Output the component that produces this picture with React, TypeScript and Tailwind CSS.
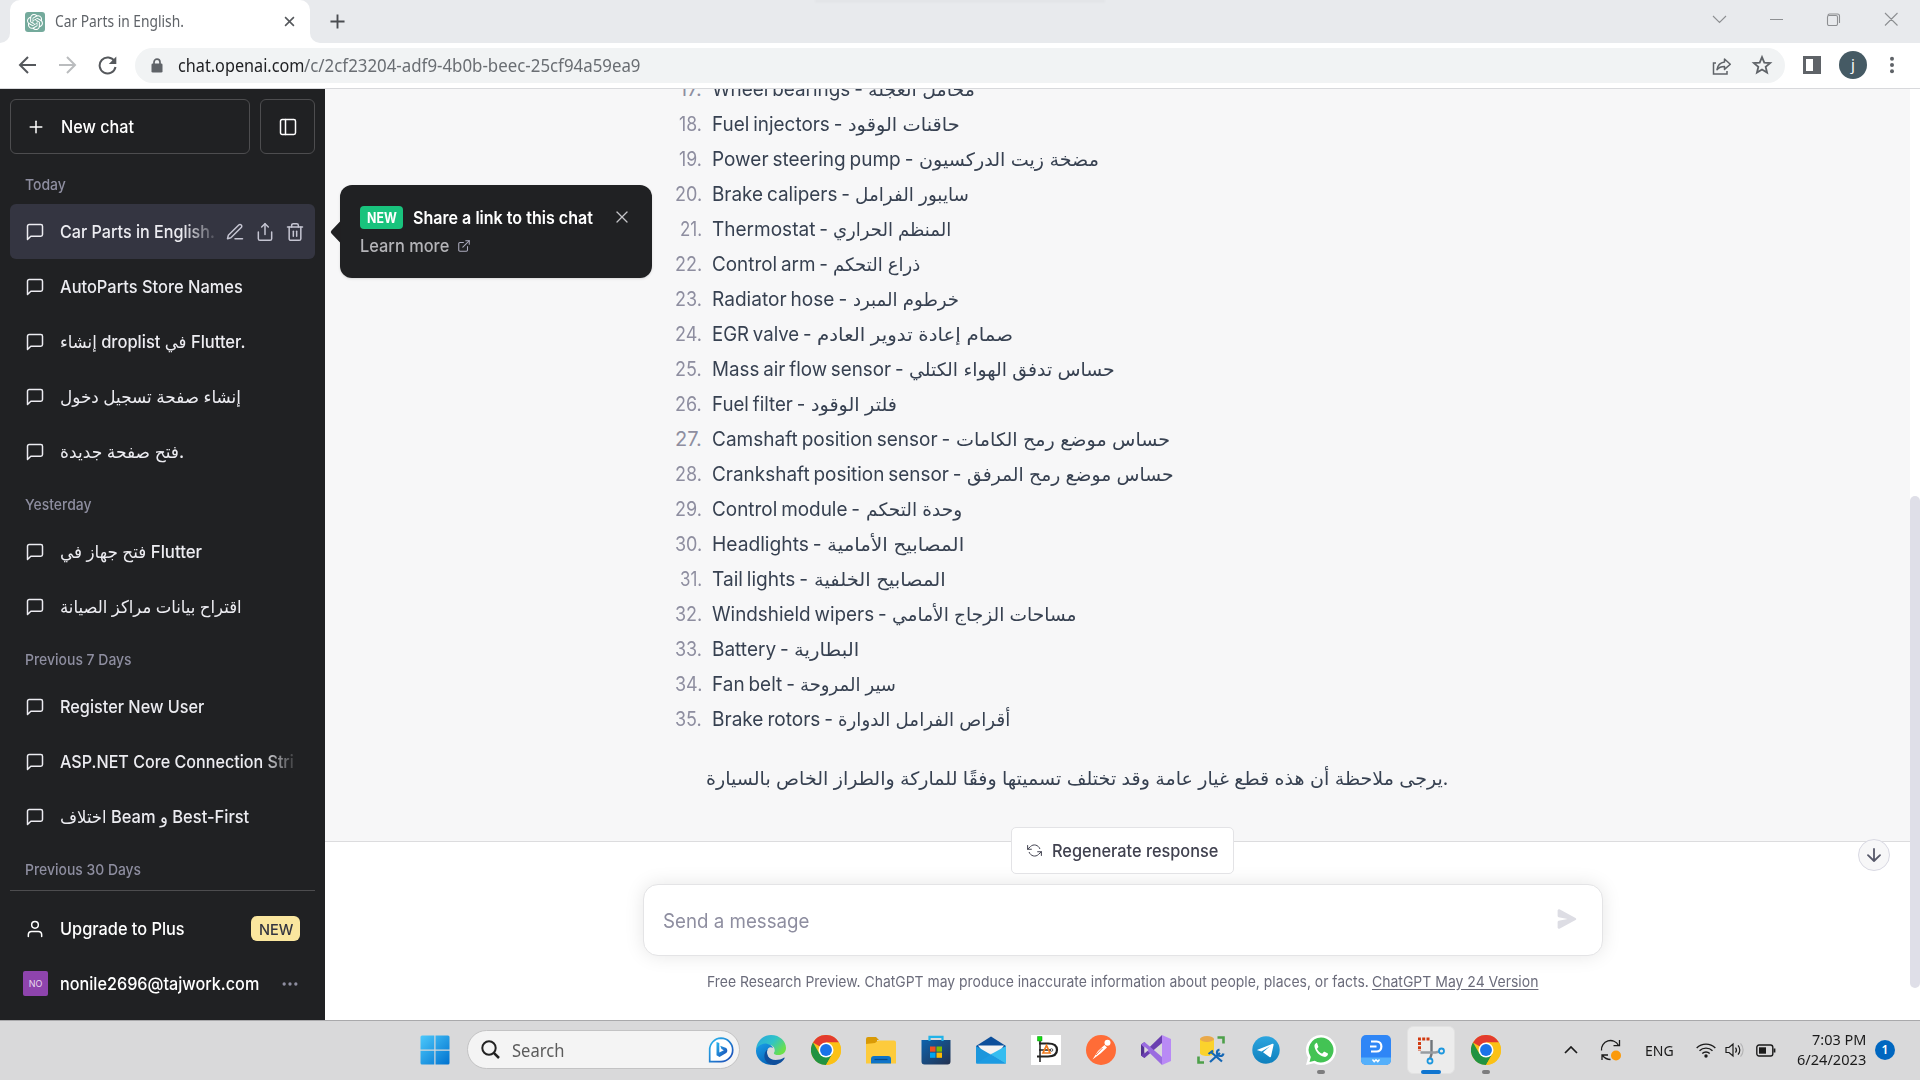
import React, { useLayoutEffect, useRef, useState, type ReactNode } from "react";
import {
  FiEdit3,
  FiExternalLink,
  FiMessageSquare,
  FiMoreHorizontal,
  FiPlus,
  FiRefreshCcw,
  FiShare,
  FiSidebar,
  FiTrash2,
  FiUser,
  FiX,
} from "react-icons/fi";
import { SiOpenai } from "react-icons/si";

/** One line of text squeezed or stretched to an exact width. */
function Fit({ w, className = "", children }: { w: number; className?: string; children: ReactNode }) {
  const ref = useRef<HTMLSpanElement>(null);
  const [scale, setScale] = useState(1);
  useLayoutEffect(() => {
    if (ref.current) setScale(w / ref.current.offsetWidth);
  }, [w]);
  return (
    <span className={`block shrink-0 whitespace-nowrap ${className}`} style={{ width: w }}>
      <span ref={ref} className="inline-block origin-left" style={{ transform: `scaleX(${scale})` }}>
        {children}
      </span>
    </span>
  );
}

const ui = "font-['Noto_Sans','DejaVu_Sans',sans-serif]";

/* ---------- browser chrome ---------- */

function TabStrip() {
  return (
    <div className="relative flex h-[43px] shrink-0 bg-[#e8eaed]">
      <div className="flex w-[10px] items-end bg-white">
        <div className="h-[43px] w-full rounded-br-[10px] bg-[#e8eaed]" />
      </div>
      <div className="bg-[#e8eaed]">
        <div className="flex h-[43px] w-[300px] items-center rounded-t-[10px] bg-white pl-[15px] pr-[15px]">
          <div className="flex size-5 items-center justify-center rounded-[3px] bg-[#74aa9c]">
            <SiOpenai className="size-4 text-white" />
          </div>
          <Fit w={129} className={`${ui} -mt-[2px] ml-[10px] text-[15.5px] leading-5 text-[#5f6368]`}>
            Car Parts in English.
          </Fit>
          <svg viewBox="0 0 12 12" className="-mt-[1px] ml-auto size-[11px]" fill="none" stroke="#55585c" strokeWidth="1.7">
            <path d="M1.2 1.2l9.600 9.600M10.800 1.200L1.200 10.800" />
          </svg>
        </div>
      </div>
      <div className="flex flex-1 bg-white">
        <div className="flex h-[43px] flex-1 items-center rounded-bl-[10px] bg-[#e8eaed] pl-[20px] pr-[22px]">
          <svg viewBox="0 0 16 16" className="-mt-[1px] size-[15px]" fill="none" stroke="#4a4d51" strokeWidth="2">
            <path d="M8 .5v15M.5 8h15" />
          </svg>
          <svg viewBox="0 0 186 14" className="ml-auto -mt-[6px] h-[14px] w-[186px]" fill="none" stroke="#8d8f92" strokeWidth="1.1">
            <path d="M1 4l6.500 6.500L14 4M58 7.500h13M116 3.500a1.500 1.500 0 0 1 1.500-1.500h8a2 2 0 0 1 2 2v7M173 1l12.500 12.500M185.500 1L173 13.500" />
            <rect x="115.500" y="3.500" width="10" height="10" rx="1.500" fill="#e8eaed" />
          </svg>
        </div>
      </div>
      <div className="absolute left-[815px] top-0 h-[3px] w-[290px] bg-linear-to-b from-black/5 to-transparent blur-[1px]" />
    </div>
  );
}

function Toolbar() {
  return (
    <div className="flex h-[46px] shrink-0 items-center border-b border-[#d8d9dc] bg-white pl-[18px]">
      <svg viewBox="0 0 100 20" className="-mt-[1px] h-5 w-[100px]" fill="none" strokeWidth="2">
        <path d="M18 10H2.500M10 2l-8 8 8 8" stroke="#55585c" />
        <path d="M41 10h15.500M49 2l8 8-8 8" stroke="#babcbe" />
        <path d="M96.500 6.300A8 8 0 1 0 97.500 12" stroke="#55585c" />
        <path d="M98.300 1.500v7.500h-7.500z" fill="#55585c" />
      </svg>
      <div className="ml-[17px] flex h-[35px] w-[1650px] items-center rounded-full bg-[#f1f3f4] pl-4 pr-[12px]">
        <svg viewBox="0 0 12 15" className="h-[15px] w-3">
          <path d="M3 6V4.200a3 3 0 0 1 6 0V6" fill="none" stroke="#5f6368" strokeWidth="1.700" />
          <rect x=".5" y="5.500" width="11" height="9" rx="1.300" fill="#5f6368" />
        </svg>
        <Fit w={126} className={`${ui} -mt-[2px] ml-[15px] text-[17.500px] leading-6 text-[#202124]`}>
          chat.openai.com
        </Fit>
        <Fit w={337} className={`${ui} -mt-[2px] text-[17.500px] leading-6 text-[#6a6e73]`}>
          /c/2cf23204-adf9-4b0b-beec-25cf94a59ea9
        </Fit>
        <svg viewBox="0 0 20 18" className="ml-auto h-[18px] w-5" fill="none" stroke="#5f6368" strokeWidth="1.500">
          <path d="M4 6H1.500v11H15v-3" />
          <path d="M12.500 2l5.800 5.200-5.800 5.200V9.500c-3.500 0-5.800 1-7.500 3.200C5.500 9 7.500 5.700 12.500 5z" strokeLinejoin="round" />
        </svg>
        <svg viewBox="0 0 24 24" className="-mt-[1px] ml-[19px] size-[22px]" fill="none" stroke="#5f6368" strokeWidth="2">
          <path d="M12 3.500l2.500 5.900 6.400.5-4.900 4.200 1.500 6.200L12 17l-5.500 3.300L8 14.100 3.100 9.900l6.400-.5z" />
        </svg>
      </div>
      <div className="-mt-[1px] ml-[18px] flex size-[18px] justify-end border-[3px] border-[#5f6368]">
        <div className="w-[5px] bg-[#5f6368]" />
      </div>
      <div className={`${ui} -mt-[1px] ml-[18px] flex size-7 items-center justify-center rounded-full bg-[#455a64] pb-[2px] text-[15px] leading-none text-white`}>
        j
      </div>
      <svg viewBox="0 0 4 18" className="-mt-[1px] ml-[23px] h-[18px] w-1" fill="#5f6368">
        <circle cx="2" cy="2.700" r="2" />
        <circle cx="2" cy="9" r="2" />
        <circle cx="2" cy="15.300" r="2" />
      </svg>
    </div>
  );
}

/* ---------- sidebar ---------- */

type Chat = { title: string; w: number; active?: boolean; fade?: boolean };
type Group = { label: string; w: number; chats: Chat[] };

const groups: Group[] = [
  {
    label: "Today",
    w: 41,
    chats: [
      { title: "Car Parts in English.", w: 155, active: true },
      { title: "AutoParts Store Names", w: 183 },
      { title: "إنشاء droplist في Flutter.", w: 185 },
      { title: "إنشاء صفحة تسجيل دخول", w: 181 },
      { title: "فتح صفحة جديدة.", w: 124 },
    ],
  },
  {
    label: "Yesterday",
    w: 67,
    chats: [
      { title: "فتح جهاز في Flutter", w: 142 },
      { title: "اقتراح بيانات مراكز الصيانة", w: 182 },
    ],
  },
  {
    label: "Previous 7 Days",
    w: 107,
    chats: [
      { title: "Register New User", w: 144 },
      { title: "ASP.NET Core Connection Stri", w: 234, fade: true },
      { title: "اختلاف Beam و Best-First", w: 189 },
    ],
  },
  { label: "Previous 30 Days", w: 116, chats: [] },
];

function ChatRow({ chat }: { chat: Chat }) {
  return (
    <div className={`flex h-[55px] items-center rounded-md pl-[15px] pr-[10px] text-[#ececf1] ${chat.active ? "bg-[#343541]" : ""}`}>
      <FiMessageSquare className="size-5 shrink-0" strokeWidth={1.8} />
      <div className="relative ml-[15px]">
        <Fit w={chat.w}>{chat.title}</Fit>
        {chat.active && <div className="absolute inset-y-0 right-0 w-8 bg-linear-to-l from-[#343541]/85" />}
        {chat.fade && <div className="absolute inset-y-0 right-0 w-8 bg-linear-to-l from-[#202123]/85" />}
      </div>
      {chat.active && (
        <div className="ml-auto flex gap-[10px] text-[#c5c5d2]">
          <FiEdit3 className="size-5" strokeWidth={1.8} />
          <FiShare className="size-5" strokeWidth={1.8} />
          <FiTrash2 className="size-5" strokeWidth={1.8} />
        </div>
      )}
    </div>
  );
}

function Sidebar() {
  return (
    <aside className="flex w-[325px] shrink-0 flex-col bg-[#202123] px-[10px] pt-[10px] text-[17.500px] font-medium leading-[25px] text-white">
      <div className="flex h-[55px] gap-[10px]">
        <div className="flex w-[240px] items-center rounded-md border border-[#4d4d4f] pl-[15px]">
          <FiPlus className="size-5" strokeWidth={1.8} />
          <Fit w={73} className="ml-[15px]">New chat</Fit>
        </div>
        <div className="flex w-[55px] items-center justify-center rounded-md border border-[#4d4d4f]">
          <FiSidebar className="size-5" strokeWidth={1.8} />
        </div>
      </div>
      <div className="mt-[5px] h-[732px] overflow-hidden border-b border-[#4d4d4f]">
        {groups.map((g) => (
          <section key={g.label}>
            <div className="flex h-[45px] items-center px-[15px] pt-[7px] text-[15px] leading-5 text-[#8e8ea0]">
              <Fit w={g.w}>{g.label}</Fit>
            </div>
            {g.chats.map((c) => (
              <ChatRow key={c.title} chat={c} />
            ))}
          </section>
        ))}
      </div>
      <div className="mt-[10px] flex h-[55px] items-center pl-[15px] pr-[15px]">
        <FiUser className="size-5" strokeWidth={1.800} />
        <Fit w={125} className="ml-[15px]">Upgrade to Plus</Fit>
        <span className="ml-auto flex h-[25px] w-[49px] items-center justify-center rounded-md bg-[#fae69e] text-[#343541]">
          <Fit w={34} className="pt-[1px] text-[15px] font-medium">NEW</Fit>
        </span>
      </div>
      <div className="flex h-[55px] items-center pl-[13px] pr-[15px]">
        <span className="flex size-[25px] items-center justify-center rounded-[2px] bg-[#8e44ad] text-[9px] font-normal leading-none text-[#e8d9ef]">
          NO
        </span>
        <Fit w={199} className="ml-3">nonile2696@tajwork.com</Fit>
        <FiMoreHorizontal className="ml-auto size-5 text-[#8e8ea0]" />
      </div>
    </aside>
  );
}

function SharePopover() {
  return (
    <div className="absolute left-[15px] top-[96px] h-[93px] w-[312px] rounded-xl bg-[#202123] pl-5 pr-5 pt-[19px] text-[17.500px] leading-[25px] shadow-sm">
      <svg viewBox="0 0 10 22" className="absolute -left-[10px] top-[36px] h-[22px] w-[11px]">
        <path d="M10 0v22L1 12.500q-1.500-1.500 0-3z" fill="#202123" />
      </svg>
      <div className="flex items-center">
        <span className="flex h-[23px] w-[43px] items-center justify-center rounded bg-[#19c37d] text-[14px] font-bold text-white">
          <Fit w={30}>NEW</Fit>
        </span>
        <Fit w={180} className="ml-[10px] pt-[1px] font-semibold text-white">Share a link to this chat</Fit>
        <FiX className="ml-auto size-5 text-[#c5c5c8]" strokeWidth={1.500} />
      </div>
      <div className="mt-[3px] flex items-center text-[#acacbe]">
        <Fit w={89} className="font-medium text-[#b4b4b8]">Learn more</Fit>
        <FiExternalLink className="ml-2 size-[14px]" strokeWidth={1.800} />
      </div>
    </div>
  );
}

/* ---------- conversation ---------- */

/** number, English name, x where the Arabic name starts, its width, Arabic name */
const parts: [number, string, number, number, string][] = [
  [17, "Wheel bearings", 868.5, 106.5, "محامل العجلة"],
  [18, "Fuel injectors", 848, 112, "حاقنات الوقود"],
  [19, "Power steering pump", 919, 180, "مضخة زيت الدركسيون"],
  [20, "Brake calipers", 855.5, 114, "سايبور الفرامل"],
  [21, "Thermostat", 833.5, 118, "المنظم الحراري"],
  [22, "Control arm", 833.5, 87, "ذراع التحكم"],
  [23, "Radiator hose", 853, 106, "خرطوم المبرد"],
  [24, "EGR valve", 817, 196, "صمام إعادة تدوير العادم"],
  [25, "Mass air flow sensor", 909, 206, "حساس تدفق الهواء الكتلي"],
  [26, "Fuel filter", 811, 86, "فلتر الوقود"],
  [27, "Camshaft position sensor", 956, 214, "حساس موضع رمح الكامات"],
  [28, "Crankshaft position sensor", 967.5, 207, "حساس موضع رمح المرفق"],
  [29, "Control module", 866, 96.5, "وحدة التحكم"],
  [30, "Headlights", 827, 137.5, "المصابيح الأمامية"],
  [31, "Tail lights", 814, 132, "المصابيح الخلفية"],
  [32, "Windshield wipers", 892, 185, "مساحات الزجاج الأمامي"],
  [33, "Battery", 794.5, 65, "البطارية"],
  [34, "Fan belt", 800, 95.5, "سير المروحة"],
  [35, "Brake rotors", 838.5, 172.5, "أقراص الفرامل الدوارة"],
];

function Conversation() {
  return (
    <div className="h-[753px] overflow-hidden border-b border-[#dcdcde] bg-[#f7f7f8] text-[20px] leading-[35px] text-[#374151]">
      <ol className="-mt-[17px]">
        {parts.map(([n, en, x, w, ar]) => (
          <li key={n} className="flex h-[35px] items-center">
            <span className="flex w-[377px] shrink-0 justify-end text-[#8e8ea0]">
              <Fit w={n % 10 === 1 ? 22 : n < 20 ? 23 : 27}>{n}.</Fit>
            </span>
            <Fit w={x - 717.5} className="ml-[10px] [word-spacing:-1.5px]">{en} -</Fit>
            <Fit w={w} className="ml-[5px] text-[18.500px]">{ar}</Fit>
          </li>
        ))}
      </ol>
      <p className="ml-[381px] mt-[24px]">
        <Fit w={742} className="text-[18.500px]">
          يرجى ملاحظة أن هذه قطع غيار عامة وقد تختلف تسميتها وفقًا للماركة والطراز الخاص بالسيارة.
        </Fit>
      </p>
    </div>
  );
}

function Composer() {
  return (
    <div className="flex flex-1 flex-col bg-white">
      <div className="relative z-10 -mt-[15px] ml-[686px] flex h-[47px] w-[223px] items-center rounded-[5px] border border-[#e3e3e6] bg-white pl-[15px] text-[#40414f]">
        <FiRefreshCcw className="size-[15px]" strokeWidth={1.600} />
        <Fit w={166} className="ml-[10px] text-[17.500px] font-medium leading-[25px]">Regenerate response</Fit>
      </div>
      <div className="ml-[318px] mt-[10px] flex h-[72px] w-[960px] items-center rounded-[15px] border border-[#e4e4e6] bg-white pl-[19px] pr-[25px] shadow-[0_0_19px_rgba(0,0,0,0.10)]">
        <Fit w={146} className="pt-[1px] text-[20px] leading-[30px] text-[#8e8ea0]">Send a message</Fit>
        <svg viewBox="0 0 16 16" className="-mt-[2px] ml-auto size-5" fill="#dddde4">
          <path d="M.5 1.163A1 1 0 0 1 1.970.28l12.868 6.837a1 1 0 0 1 0 1.766L1.969 15.720A1 1 0 0 1 .5 14.836V10.330a1 1 0 0 1 .816-.983L8.500 8 1.316 6.653A1 1 0 0 1 .5 5.670V1.163Z" />
        </svg>
      </div>
      <div className="ml-[382px] mt-[16px] flex gap-[3px] text-[15px] leading-5 text-[#6b6c7b]">
        <Fit w={662}>
          Free Research Preview. ChatGPT may produce inaccurate information about people, places, or facts.
        </Fit>
        <Fit w={166}>
          <u className="underline-offset-2">ChatGPT May 24 Version</u>
        </Fit>
      </div>
    </div>
  );
}

/* ---------- taskbar ---------- */

function Slot({ children }: { children: ReactNode }) {
  return <div className="relative flex h-12 w-[55px] items-center justify-center">{children}</div>;
}

function ChromeLogo() {
  return (
    <svg viewBox="0 0 48 48" className="size-[30px]">
      <circle cx="24" cy="24" r="24" fill="#fbc116" />
      <path d="M24 24L3.200 12A24 24 0 0 1 44.800 12H24z" fill="#e33b2e" />
      <path d="M3.200 12A24 24 0 0 0 24 48l10.400-18L24 24l-10.400 6z" fill="#229342" />
      <path d="M34.400 30L24 48A24 24 0 0 0 44.800 12H24z" fill="#fbc116" />
      <circle cx="24" cy="24" r="12" fill="#fff" />
      <circle cx="24" cy="24" r="9.500" fill="#1a73e8" />
    </svg>
  );
}

function EdgeLogo() {
  return (
    <svg viewBox="0 0 30 30" className="size-[30px]">
      <defs>
        <linearGradient id="edge-top" x1="0" y1="0" x2="1" y2=".6">
          <stop offset="0" stopColor="#2aa5e0" />
          <stop offset=".55" stopColor="#2fc3c8" />
          <stop offset="1" stopColor="#6be04a" />
        </linearGradient>
        <linearGradient id="edge-side" x1="0" y1="0" x2=".6" y2="1">
          <stop offset="0" stopColor="#1a9fe8" />
          <stop offset="1" stopColor="#0563b8" />
        </linearGradient>
      </defs>
      <path d="M0 15C.5 6 7 0 15 0c9 0 15 6.500 15 13 0 4.500-3.500 7-7.500 7-3.500 0-5-1.200-4.500-2.200 1.500-2 1-6.800-4-7.800C8 9 2 11 0 15z" fill="url(#edge-top)" />
      <path d="M0 15c1.500-5 7-7 11-6.300 3.500.6 5.500 2.500 6 4.300-3-2-6 .5-6 4 0 6 5 10.500 10 11.300C10 33-.5 25 0 15z" fill="url(#edge-side)" />
      <path d="M11.500 14.500c-2 5 1.500 10.500 8 10.500 3.500 0 6-1 8.300-2.300.6-.3 1 .2.700.7C26 27.500 21.500 30 17 30c-6-.5-9.500-6-8.500-10.500.5-2.500 1.500-4 3-5z" fill="#0f4f9c" />
    </svg>
  );
}

function Taskbar() {
  return (
    <footer className={`${ui} flex h-[60px] shrink-0 border-t border-[#a9a9ab] bg-[#d9d9da] pt-[5px]`}>
      <div className="ml-[407px] flex h-12">
        <Slot>
          <svg viewBox="0 0 30 30" className="size-[30px]">
            <defs>
              <linearGradient id="win" x1="0" y1="0" x2="1" y2="1">
                <stop offset="0" stopColor="#4cc9fb" />
                <stop offset="1" stopColor="#0072cf" />
              </linearGradient>
            </defs>
            <path d="M2 .5h12.300v14H.5V2A1.500 1.500 0 0 1 2 .5zM15.500.5H28A1.500 1.500 0 0 1 29.500 2v12.500h-14zM.5 15.700h13.800v13.800H2A1.500 1.500 0 0 1 .5 28zM15.500 15.700h14V28a1.500 1.500 0 0 1-1.500 1.500H15.500z" fill="url(#win)" />
          </svg>
        </Slot>
        <div className="ml-[5px] mr-[3px] mt-[4px] flex h-[39px] w-[273px] items-center rounded-full border border-[#c3c3c4] bg-[#f4f4f4] pl-[13px] pr-[5px]">
          <svg viewBox="0 0 19 19" className="size-[19px]" fill="none" stroke="#222" strokeWidth="2">
            <circle cx="8" cy="8" r="6.700" />
            <path d="M12.800 12.800L18 18" strokeWidth="2.500" />
          </svg>
          <Fit w={52} className="ml-[12px] text-[17.500px] leading-6 text-[#5c5c5c]">Search</Fit>
          <svg viewBox="0 0 26 26" className="ml-auto size-[26px]" fill="none">
            <defs>
              <linearGradient id="bing" x1="0" y1="0" x2="1" y2="1">
                <stop offset="0" stopColor="#28b8ee" />
                <stop offset="1" stopColor="#1b47b5" />
              </linearGradient>
            </defs>
            <path d="M13 1.200A11.700 11.700 0 1 1 13 24.600H1.700V13A11.500 11.500 0 0 1 13 1.200z" fill="#fff" stroke="url(#bing)" strokeWidth="1.700" />
            <path d="M8.500 5l2.800 1v9.500l4.500-2.300-2.300-1.200-1.300-3.300 6 2.300c1.500 1.500 1.500 3.800 0 5L11.500 20l-3-1.800z" fill="url(#bing)" />
          </svg>
        </div>
        <Slot><EdgeLogo /></Slot>
        <Slot><ChromeLogo /></Slot>
        <Slot>
          <svg viewBox="0 0 30 30" className="size-[30px]">
            <path d="M0 4a2 2 0 0 1 2-2h8l3 3h-2v5H0z" fill="#d99a06" />
            <path d="M0 9l9-1 3-2.500h16A2 2 0 0 1 30 7.500V28.500H0z" fill="#fdcb3c" />
            <path d="M5 28.500V24a3 3 0 0 1 3-3h14a3 3 0 0 1 3 3v4.500z" fill="#0f74c8" />
            <path d="M8.500 24.500h13" stroke="#0a4b86" strokeWidth="1.200" />
          </svg>
        </Slot>
        <Slot>
          <svg viewBox="0 0 30 30" className="size-[30px]">
            <defs>
              <linearGradient id="store" x1="0" y1="0" x2="1" y2="1">
                <stop offset="0" stopColor="#0d63ae" />
                <stop offset="1" stopColor="#243250" />
              </linearGradient>
            </defs>
            <path d="M.5 5h29v21.500a3 3 0 0 1-3 3h-23a3 3 0 0 1-3-3z" fill="url(#store)" />
            <path d="M8.500 6V1.800h13V6" fill="none" stroke="#22b3e8" strokeWidth="2.200" />
            <path d="M9 11.500h5.500v5.200H9z" fill="#f25022" />
            <path d="M15.500 11.500H21v5.200h-5.500z" fill="#7fba00" />
            <path d="M9 17.600h5.500v5.200H9z" fill="#00a4ef" />
            <path d="M15.500 17.600H21v5.200h-5.500z" fill="#ffb900" />
          </svg>
        </Slot>
        <Slot>
          <svg viewBox="0 0 30 30" className="size-[30px]">
            <path d="M0 11L15 1.500 30 11v6H0z" fill="#0c4f9b" />
            <path d="M2 10.500h26l-6 8H8z" fill="#f3f3f3" />
            <path d="M0 11l30 17.500H1a1 1 0 0 1-1-1z" fill="#1b96dc" />
            <path d="M30 11L14.500 19.500 30 28.500z" fill="#35bdf0" />
            <path d="M0 28.500h30L15 19.500z" fill="#1c9be2" />
          </svg>
        </Slot>
        <Slot>
          <svg viewBox="0 0 30 30" className="size-[30px]">
            <path d="M0 0h30v30H0z" fill="#fff" />
            <path d="M9 6v21" stroke="#555" strokeWidth="2" />
            <path d="M8 8.500h9c6 0 9 2 9 6.300s-3 6.700-9 6.700H6" fill="none" stroke="#222" strokeWidth="2.200" />
            <path d="M8 15h12" stroke="#222" strokeWidth="1.500" />
            <path d="M15.500 10.500l3.500 7.500h-7z" fill="none" stroke="#f07a1c" strokeWidth="1.700" />
            <circle cx="20.500" cy="15" r="1.300" fill="none" stroke="#444" strokeWidth=".9" />
            <path d="M6.500 1.500H11V6H6.500z" fill="#10e010" stroke="#0a8a0a" strokeWidth=".5" />
          </svg>
        </Slot>
        <Slot>
          <svg viewBox="0 0 30 30" className="size-[30px]">
            <circle cx="15" cy="15" r="15" fill="#ff6c37" />
            <circle cx="21.500" cy="7.800" r="3" fill="#fff" />
            <path d="M18.500 10l2.500 2.500-6.500 6-8 6 5.500-8.500z" fill="#fff" />
            <path d="M16.500 13l-6.500 7" stroke="#ff6c37" strokeWidth=".9" />
          </svg>
        </Slot>
        <Slot>
          <svg viewBox="0 0 30 30" className="size-[30px]">
            <path d="M0 9.500L3.500 7v16L0 20.500z" fill="#52318f" />
            <path d="M0 20.500L21 0v8L3.500 23z" fill="#6a3fb0" />
            <path d="M3.500 7L21 22V30L0 9.500z" fill="#9a6ce0" />
            <path d="M21 0l9 4v22l-9 4z" fill="#b98af5" />
            <path d="M3.500 11.500v7L7.500 15z" fill="#d9d9da" />
            <path d="M21 9.500v11L14 15z" fill="#d9d9da" />
          </svg>
        </Slot>
        <Slot>
          <svg viewBox="0 0 30 30" className="size-[30px]">
            <path d="M21.500 2.500h6v6M8 27.500H2.500v-6" fill="none" stroke="#4da04a" strokeWidth="2.600" />
            <path d="M4 4v14c0 4 14 4 14 0V4z" fill="#fbd22c" />
            <ellipse cx="11" cy="4" rx="7" ry="2.900" fill="#e9a94a" />
            <path d="M14 27l10-9M15.500 17.500l10.500 9" stroke="#1467b5" strokeWidth="2.200" />
            <path d="M12.500 19l4.500-3.500M23.500 14.500a3.300 3.300 0 1 0 4 4" fill="none" stroke="#1467b5" strokeWidth="2.200" />
          </svg>
        </Slot>
        <Slot>
          <svg viewBox="0 0 28 28" className="size-7">
            <defs>
              <linearGradient id="tg" x1="0" y1="0" x2="0" y2="1">
                <stop offset="0" stopColor="#2ca5df" />
                <stop offset="1" stopColor="#0f80bd" />
              </linearGradient>
            </defs>
            <circle cx="14" cy="14" r="13.700" fill="url(#tg)" />
            <path d="M5.500 13.700L20.500 7.800c.8-.3 1.300.2 1.100 1L19 20.500c-.2.800-.8 1-1.500.5l-6.500-4.700 7-6-8.500 5.300-3.900-1.300c-.7-.2-.7-.4-.1-.6z" fill="#fff" />
          </svg>
        </Slot>
        <Slot>
          <svg viewBox="0 0 30 30" className="absolute size-[30px]">
            <path d="M15 0a15 15 0 1 1-7 28.200L0 30l2-7.500A15 15 0 0 1 15 0z" fill="#fff" />
            <path d="M15 2.500a12.500 12.500 0 1 1-6.300 23.300L3.500 27l1.300-5A12.500 12.500 0 0 1 15 2.500z" fill="#43c354" />
          </svg>
          <svg viewBox="0 0 24 24" className="relative size-[19px]" fill="#fff">
            <path d="M6.600 2.500C5 3.500 4 5 4.500 7.500c1.500 6.500 6 11 12 12.500 2.500.4 4.500-1 5-3.500 0-.6-.2-.9-.7-1.100l-3.600-1.700c-.5-.2-.9-.1-1.200.3l-1.300 1.600c-.3.400-.7.400-1.200.2-2.700-1.200-4.300-2.800-5.700-5.300-.2-.4-.2-.7.100-1l1.200-1.500c.3-.4.300-.7.100-1.100L7.900 3c-.3-.6-.7-.8-1.300-.5z" />
          </svg>
          <span className="absolute bottom-0 h-1 w-2 rounded-full bg-[#7d7d7e]" />
        </Slot>
        <Slot>
          <svg viewBox="0 0 30 30" className="size-[30px]">
            <rect width="30" height="30" rx="5" fill="#2f86f6" />
            <path d="M0 22.500h30V25a5 5 0 0 1-5 5H5a5 5 0 0 1-5-5z" fill="#55b0fb" />
            <path d="M10 6.500h5.500c6.500 0 6.500 10 0 10H10M9 11.500h6.500" fill="none" stroke="#fff" strokeWidth="2.200" />
            <path d="M11.500 24.500l1.700 2.200 1.800-2 1.800 2 1.700-2.200" fill="none" stroke="#fff" strokeWidth="1.400" />
          </svg>
        </Slot>
        <Slot>
          <div className="relative flex size-12 items-center justify-center rounded-md border border-[#e2e2e2] bg-[#ececec]">
            <svg viewBox="0 0 30 30" className="size-[30px]" fill="none">
              <path d="M13.500 4H3.500v12" stroke="#d13a10" strokeWidth="3" strokeDasharray="3 1.300" />
              <path d="M15.500 5v14l-1.500 5" stroke="#70757a" strokeWidth="2.400" />
              <path d="M4.500 17.500h15l4-1" stroke="#979ca1" strokeWidth="2.600" />
              <circle cx="14" cy="26" r="2.500" stroke="#1d97de" strokeWidth="1.800" />
              <circle cx="25.500" cy="16" r="2.500" stroke="#1d97de" strokeWidth="1.800" />
            </svg>
            <span className="absolute -bottom-[1px] h-1 w-5 rounded-full bg-[#0f75d0]" />
          </div>
        </Slot>
        <Slot>
          <ChromeLogo />
          <span className="absolute bottom-0 h-1 w-2 rounded-full bg-[#7d7d7e]" />
        </Slot>
      </div>
      <div className="ml-auto flex h-12 items-center pr-[25px] text-[#1b1b1b]">
        <svg viewBox="0 0 14 8" className="h-2 w-[14px]" fill="none" stroke="#1b1b1b" strokeWidth="1.700">
          <path d="M1 7l6-6 6 6" />
        </svg>
        <svg viewBox="0 0 22 22" className="ml-[22px] size-[22px]" fill="none" stroke="#1b1b1b" strokeWidth="1.300">
          <path d="M1.500 11.500A9 9 0 0 1 18.500 6.500M19.500 1v5.700h-6M2 21v-5h6M2.500 16.500c2 2.500 4.500 4 8 4" />
          <circle cx="16" cy="16.500" r="5" fill="#fb9a0a" stroke="none" />
        </svg>
        <Fit w={29} className="ml-[23px] text-[15px] leading-5">ENG</Fit>
        <svg viewBox="0 0 20 16" className="ml-[22px] h-4 w-5" fill="none" stroke="#1b1b1b" strokeWidth="1.400">
          <path d="M.7 6a13 13 0 0 1 18.600 0M3.500 8.800a9.200 9.200 0 0 1 13 0M6.300 11.500a5.300 5.300 0 0 1 7.400 0" />
          <circle cx="10" cy="14" r="1.700" fill="#1b1b1b" stroke="none" />
        </svg>
        <svg viewBox="0 0 21 16" className="ml-[9px] h-4 w-[21px]" fill="none" stroke="#1b1b1b" strokeWidth="1.200">
          <path d="M1 5.500h3L8 2v12l-4-3.500H1zM10.500 5.500a4 4 0 0 1 0 5M13 3.300a7 7 0 0 1 0 9.400" />
          <path d="M15.500 1.300a10 10 0 0 1 0 13.400" stroke="#b5b5b6" />
        </svg>
        <svg viewBox="0 0 20 13" className="ml-[10px] h-[13px] w-5" fill="none" stroke="#1b1b1b" strokeWidth="1.400">
          <rect x=".8" y="1" width="16" height="11" rx="2.200" />
          <path d="M3 3.300h7v6.400H3z" fill="#1b1b1b" stroke="none" />
          <path d="M18.500 4.500v4" strokeWidth="1.800" />
        </svg>
        <div className="-mt-[2px] ml-[21px] flex w-[69px] flex-col items-end text-[15px] leading-5">
          <Fit w={54}>7:03 PM</Fit>
          <Fit w={69}>6/24/2023</Fit>
        </div>
        <span className="ml-[9px] flex size-5 items-center justify-center rounded-full bg-[#0067c0] text-[12px] font-semibold leading-none text-white">
          1
        </span>
      </div>
    </footer>
  );
}

export default function App() {
  return (
    <div className="flex h-[1080px] w-[1920px] flex-col overflow-hidden bg-white font-['Inter','DejaVu_Sans',sans-serif]">
      <TabStrip />
      <Toolbar />
      <div className="flex h-[931px] shrink-0">
        <Sidebar />
        <main className="relative flex w-[1585px] flex-col">
          <Conversation />
          <Composer />
          <SharePopover />
          <div className="absolute right-5 top-[750px] z-10 flex size-8 items-center justify-center rounded-full border border-[#d9d9e3] bg-[#f7f7f8]">
            <svg viewBox="0 0 14 14" className="size-[14px]" fill="none" stroke="#565869" strokeWidth="1.800" strokeLinecap="round" strokeLinejoin="round">
              <path d="M7 1v12M1 7.200L7 13l6-5.800" />
            </svg>
          </div>
        </main>
        <div className="w-[10px] bg-white pt-[407px]">
          <div className="h-[492px] rounded-full bg-[#dfdfe8]" />
        </div>
      </div>
      <Taskbar />
    </div>
  );
}
